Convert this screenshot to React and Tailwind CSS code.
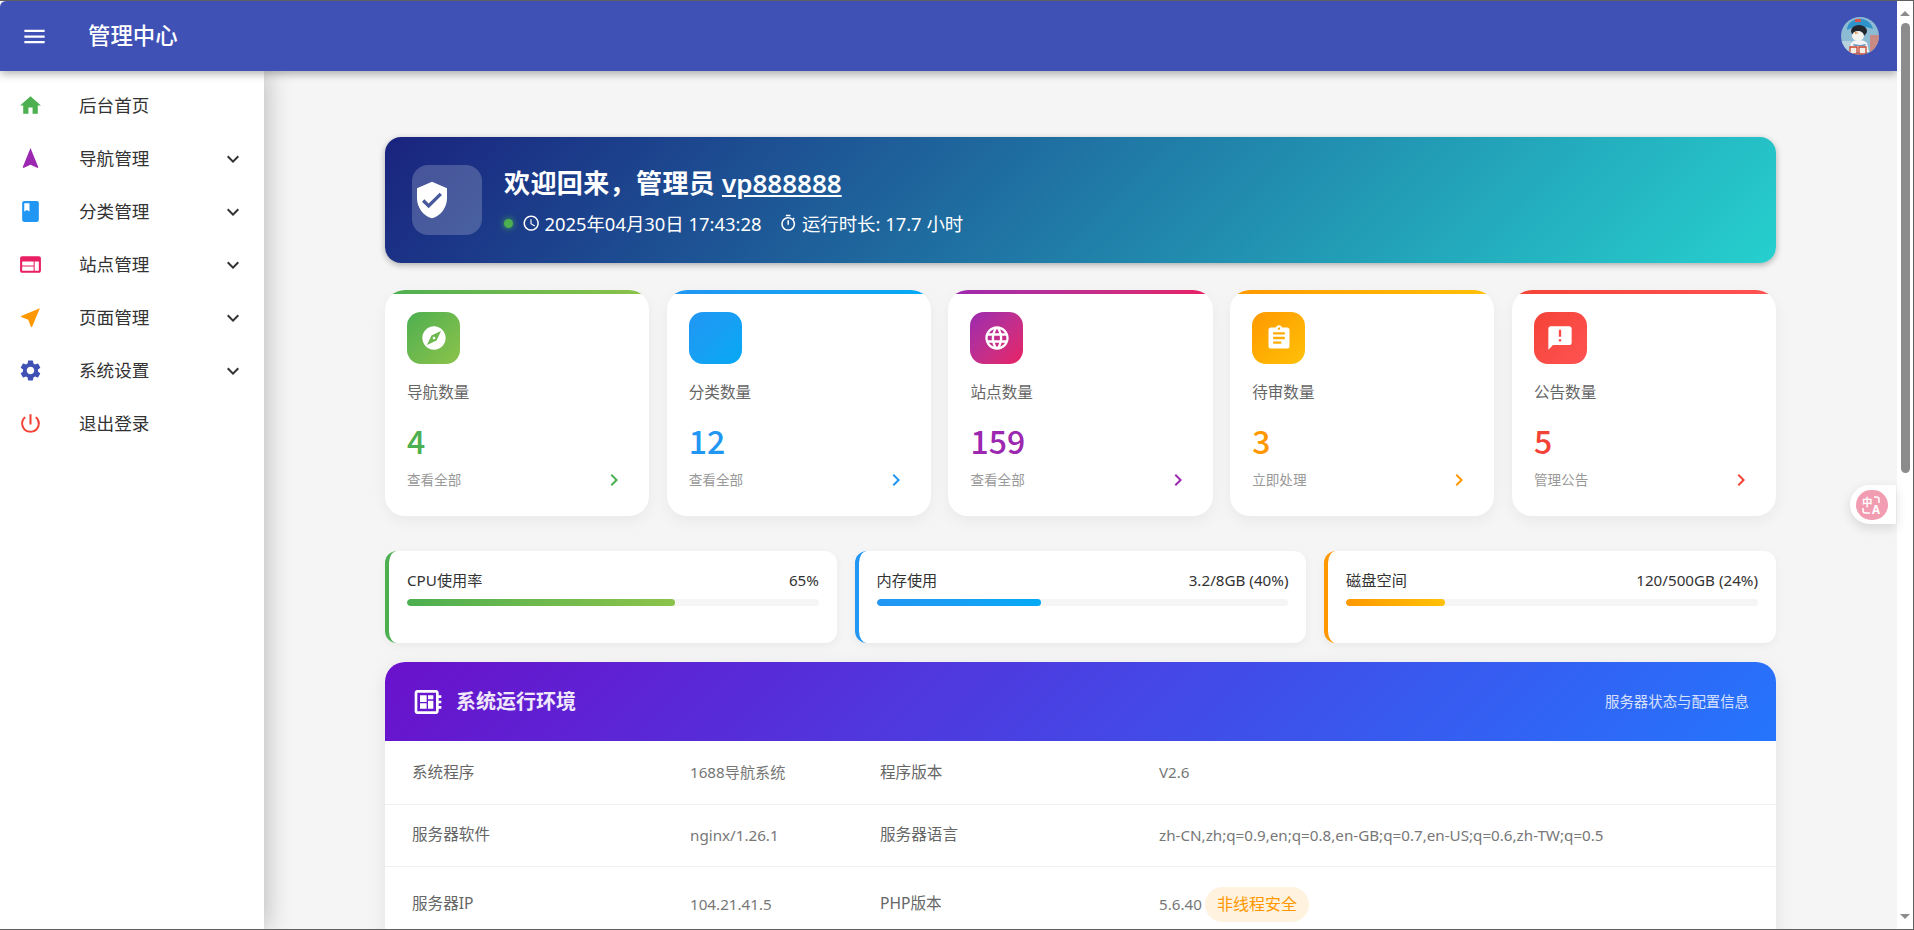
import React from 'react';
import {
  MdMenu, MdHome, MdNavigation, MdBook, MdWeb, MdNearMe, MdSettings, MdPowerSettingsNew, MdExpandMore,
  MdVerifiedUser, MdAccessTime, MdOutlineTimer, MdExplore, MdLanguage, MdAssignment, MdAnnouncement,
  MdChevronRight, MdDeveloperBoard,
} from 'react-icons/md';

const navItems = [
  { label: '后台首页', icon: MdHome, color: 'text-[#4caf50]' },
  { label: '导航管理', icon: MdNavigation, color: 'text-[#9c27b0]', more: true },
  { label: '分类管理', icon: MdBook, color: 'text-[#2196f3]', more: true },
  { label: '站点管理', icon: MdWeb, color: 'text-[#e91e63]', more: true },
  { label: '页面管理', icon: MdNearMe, color: 'text-[#ff9800]', more: true },
  { label: '系统设置', icon: MdSettings, color: 'text-[#3f51b5]', more: true },
  { label: '退出登录', icon: MdPowerSettingsNew, color: 'text-[#f44336]' },
];

const stats = [
  { label: '导航数量', value: '4', link: '查看全部', icon: MdExplore, bar: 'from-[#4caf50] to-[#8bc34a]', text: 'text-[#4caf50]' },
  { label: '分类数量', value: '12', link: '查看全部', icon: null, bar: 'from-[#2196f3] to-[#03a9f4]', text: 'text-[#2196f3]' },
  { label: '站点数量', value: '159', link: '查看全部', icon: MdLanguage, bar: 'from-[#9c27b0] to-[#e91e63]', text: 'text-[#9c27b0]' },
  { label: '待审数量', value: '3', link: '立即处理', icon: MdAssignment, bar: 'from-[#ff9800] to-[#ffc107]', text: 'text-[#ff9800]' },
  { label: '公告数量', value: '5', link: '管理公告', icon: MdAnnouncement, bar: 'from-[#f44336] to-[#ff5252]', text: 'text-[#f44336]' },
];

const meters = [
  { label: 'CPU使用率', value: '65%', pct: 65, border: 'border-[#4caf50]', bar: 'from-[#4caf50] to-[#8bc34a]' },
  { label: '内存使用', value: '3.2/8GB (40%)', pct: 40, border: 'border-[#2196f3]', bar: 'from-[#2196f3] to-[#03a9f4]' },
  { label: '磁盘空间', value: '120/500GB (24%)', pct: 24, border: 'border-[#ff9800]', bar: 'from-[#ff9800] to-[#ffc107]' },
];

const Avatar = () => (
  <svg viewBox="0 0 38 38" className="w-[38px] h-[38px] rounded-full">
    <rect width="38" height="38" fill="#8dbbd4" />
    <rect x="29" y="18" width="9" height="20" fill="#c98a84" />
    <rect x="0" y="24" width="10" height="14" fill="#b5d0df" />
    <path d="M6 13c0-8 8-12 15-11 6 1 10 5 11 10-8-3-18-3-26 1z" fill="#2f93c9" />
    <rect x="14" y="2" width="6" height="3" fill="#d9534f" />
    <ellipse cx="18" cy="14" rx="8" ry="6" fill="#23262d" />
    <ellipse cx="17" cy="19" rx="6" ry="5" fill="#f4f4f1" />
    <path d="M14 15l4 1-4 1z" fill="#e08a3c" />
    <path d="M10 26c2-4 13-4 16 0l2 9H8z" fill="#f2f3f5" />
    <path d="M12 27l7 1 6-1-1 2H13z" fill="#6b9ac4" />
    <path d="M9 30h7v7H9zM18 30h7v7h-7z" fill="#f1eeea" stroke="#c8432f" strokeWidth="1.300" />
  </svg>
);

const Row = ({ cells, size }) => (
  <div className={`grid grid-cols-[278px_190px_279px_1fr] items-center ${size}`}>
    <div className="pl-[27px] text-[#666] text-[15.600px]">{cells[0]}</div>
    <div className="pl-[27px] text-[#777] text-[15.200px]">{cells[1]}</div>
    <div className="pl-[27px] text-[#666] text-[15.600px]">{cells[2]}</div>
    <div className="pl-[27px] text-[#777] text-[15.200px] flex items-center gap-[3px]">
      {cells[3]}
      {cells[4] && (
        <span className="inline-flex items-center h-[35px] px-[12px] rounded-full bg-[#fff3e0] text-[#ff9800] text-[16px]">{cells[4]}</span>
      )}
    </div>
  </div>
);

const App = () => {
  return (
    <div className="relative flex h-[930px] w-[1914px] overflow-hidden bg-white border-t border-r border-b border-[#5f5f5f] font-['Noto_Sans','Noto_Sans_CJK_SC',sans-serif]">
      <div className="flex flex-col flex-1 min-w-0">
        <header className="relative z-20 flex items-center h-[70px] shrink-0 rounded-tl-[6px] bg-[#3f51b5] text-white shadow-[0_3px_8px_rgba(0,0,0,0.3)]">
          <MdMenu className="ml-[21px] text-[27px]" />
          <h1 className="ml-[40px] mt-[1px] text-[22.400px] font-medium leading-none">管理中心</h1>
          <div className="ml-auto mr-[18px] flex"><Avatar /></div>
        </header>
        <div className="flex flex-1 min-h-0">
          <aside className="relative z-10 w-[264px] shrink-0 pt-[8px] bg-white shadow-[2px_0_24px_rgba(0,0,0,0.25)]">
            {navItems.map((item) => (
              <div key={item.label} className="flex items-center h-[53px] pl-[18px] pr-[19px]">
                <item.icon className={`text-[25px] ${item.color}`} />
                <span className="ml-[36px] text-[17.600px] text-[#333]">{item.label}</span>
                {item.more && <MdExpandMore className="ml-auto text-[24px] text-[#333]" />}
              </div>
            ))}
          </aside>
          <main className="flex-1 min-w-0 overflow-hidden bg-[#f5f5f5] pt-[66px] px-[121px]">
            <section className="flex items-center h-[126px] px-[27px] rounded-[16px] bg-[linear-gradient(135deg,#1a237e,#26d0ce)] text-white shadow-[0_2px_6px_rgba(0,0,0,0.3)]">
              <div className="flex items-center w-[70px] h-[70px] rounded-[16px] bg-white/20">
                <MdVerifiedUser className="text-[40px]" />
              </div>
              <div className="ml-[22px]">
                <div className="h-[36px] text-[26px] font-semibold leading-[36px]">
                  <span className="tracking-[0.4px]">欢迎回来，管理员</span> <span className="underline">vp888888</span>
                </div>
                <div className="flex items-center mt-[11px] h-[24px] text-[18.400px]">
                  <span className="w-[9px] h-[9px] rounded-full bg-[#4caf50] shadow-[0_0_6px_#4caf50]" />
                  <MdAccessTime className="ml-[9px] text-[18.400px]" />
                  <span className="ml-[4px]">2025年04月30日 17:43:28</span>
                  <MdOutlineTimer className="ml-[18px] text-[18.400px]" />
                  <span className="ml-[4px]">运行时长: 17.7 小时</span>
                </div>
              </div>
            </section>

            <section className="grid grid-cols-5 gap-[17.600px] mt-[27px]">
              {stats.map((s) => (
                <div key={s.label} className="relative h-[226px] overflow-hidden rounded-[20px] bg-white px-[22px] pt-[22px] shadow-[0_5px_15px_rgba(0,0,0,0.05)]">
                  <div className={`absolute top-0 left-0 right-0 h-[4px] bg-gradient-to-r ${s.bar}`} />
                  <div className={`flex items-center justify-center w-[53px] h-[52px] rounded-[14px] bg-gradient-to-br text-white ${s.bar}`}>
                    {s.icon && <s.icon className="text-[28px]" />}
                  </div>
                  <div className="mt-[17px] text-[15.600px] leading-[22px] text-[#666]">{s.label}</div>
                  <div className={`mt-[17px] font-['Noto_Sans_CJK_SC',sans-serif] text-[32px] font-medium leading-[40px] ${s.text}`}>{s.value}</div>
                  <div className="flex items-center justify-between mt-[10px] h-[20px] pr-[1px]">
                    <span className="text-[13.600px] text-[#999]">{s.link}</span>
                    <MdChevronRight className={`text-[24px] ${s.text}`} />
                  </div>
                </div>
              ))}
            </section>

            <section className="grid grid-cols-3 gap-[17.600px] mt-[35px]">
              {meters.map((m) => (
                <div key={m.label} className={`h-[92px] rounded-[12px] border-l-4 bg-white pl-[18px] pr-[18px] pt-[18px] shadow-[0_3px_10px_rgba(0,0,0,0.05)] ${m.border}`}>
                  <div className="flex items-center justify-between h-[22px] text-[15.200px] text-[#333]">
                    <span>{m.label}</span>
                    <span>{m.value}</span>
                  </div>
                  <div className="mt-[8px] h-[7px] rounded-full bg-[#f5f5f5] overflow-hidden">
                    <div className={`h-full rounded-full bg-gradient-to-r ${m.bar}`} style={{ width: `${m.pct}%` }} />
                  </div>
                </div>
              ))}
            </section>

            <section className="mt-[19px] rounded-t-[20px] bg-white shadow-[0_5px_20px_rgba(0,0,0,0.08)]">
              <div className="flex items-center h-[79px] pl-[27px] pr-[27px] rounded-t-[20px] bg-[linear-gradient(135deg,#6a11cb,#2575fc)] text-white">
                <MdDeveloperBoard className="text-[32px]" />
                <span className="ml-[12px] text-[20px] font-semibold text-white/90">系统运行环境</span>
                <span className="ml-auto text-[14.400px] text-white/80">服务器状态与配置信息</span>
              </div>
              <Row size="h-[63.500px] border-b border-[#f0f0f0]" cells={['系统程序', '1688导航系统', '程序版本', 'V2.6']} />
              <Row size="h-[62px] border-b border-[#f0f0f0]" cells={['服务器软件', 'nginx/1.26.1', '服务器语言', 'zh-CN,zh;q=0.9,en;q=0.8,en-GB;q=0.7,en-US;q=0.6,zh-TW;q=0.5']} />
              <Row size="h-[75px]" cells={['服务器IP', '104.21.41.5', 'PHP版本', '5.6.40', '非线程安全']} />
            </section>
          </main>
        </div>
      </div>

      <div className="flex flex-col items-center w-[16px] shrink-0 bg-white z-30">
        <div className="mt-[10px] w-0 h-0 border-x-[5px] border-x-transparent border-b-[5px] border-b-[#8c8c8c]" />
        <div className="mt-[7px] w-[9px] h-[450px] rounded-full bg-[#8c8c8c]" />
        <div className="mt-auto mb-[10px] w-0 h-0 border-x-[5px] border-x-transparent border-t-[5px] border-t-[#8c8c8c]" />
      </div>

      <div className="absolute z-40 top-[484px] right-[17px] flex items-center w-[46px] h-[39px] pl-[6px] rounded-l-full bg-white shadow-[0_4px_12px_rgba(0,0,0,0.12)]">
        <div className="flex items-center justify-center w-[32px] h-[30px] rounded-full bg-[#f29cb2] text-white">
          <svg viewBox="0 0 32 30" className="w-[32px] h-[30px]" fill="none" stroke="white" strokeWidth="1.500">
            <path d="M18 7h2.500c1.500 0 2.500 1 2.500 2.500V13" />
            <path d="M7 18v2.500C7 22 8 23 9.500 23H14" />
            <text x="6" y="15.500" fontSize="10.500" fontWeight="700" fill="white" stroke="none">中</text>
            <text x="16" y="24" fontSize="11.500" fontWeight="700" fill="white" stroke="none">A</text>
          </svg>
        </div>
      </div>
    </div>
  );
};

export default App;
